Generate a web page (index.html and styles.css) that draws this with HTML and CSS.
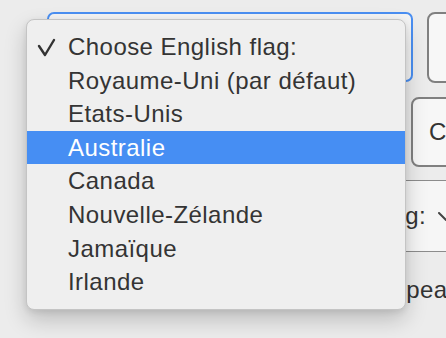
FILE: index.html
```html
<!DOCTYPE html>
<html lang="fr">
<head>
<meta charset="utf-8">
<title>Choose English flag</title>
<link rel="stylesheet" href="styles.css">
</head>
<body>
<div class="page">
  <div class="row-top">
    <div class="select-focused">Choose English flag:</div>
    <div class="btn btn-top">↻ Réinitialiser</div>
  </div>
  <div class="row-second">
    <div class="btn btn-second">Copier</div>
  </div>
  <div class="section">
    <span class="section-label">Setting:</span>
    <svg class="chevron" width="16" height="10" viewBox="0 0 16 10"><path d="M1 1 L8 8 L15 1" fill="none" stroke="#444" stroke-width="2" stroke-linecap="round" stroke-linejoin="round"/></svg>
  </div>
  <p class="footer-text">Appearance settings</p>
</div>

<div class="menu">
  <div class="item checked">
    <svg class="check" width="20" height="20" viewBox="0 0 20 20"><path d="M2 9 L8 18 L17 3" fill="none" stroke="#333" stroke-width="2.4" stroke-linecap="round" stroke-linejoin="round"/></svg>
    Choose English flag:
  </div>
  <div class="item">Royaume-Uni (par défaut)</div>
  <div class="item">Etats-Unis</div>
  <div class="item active">Australie</div>
  <div class="item">Canada</div>
  <div class="item">Nouvelle-Zélande</div>
  <div class="item">Jamaïque</div>
  <div class="item">Irlande</div>
</div>
</body>
</html>
```
FILE: styles.css
```css
html, body {
  margin: 0;
  padding: 0;
}
body {
  width: 446px;
  height: 338px;
  overflow: hidden;
  background: #ececec;
  font-family: "Liberation Sans", Arial, sans-serif;
  color: #333333;
  position: relative;
}
.page {
  width: 640px;
  padding-top: 12px;
}
.row-top {
  display: flex;
  gap: 14px;
  padding-left: 47px;
}
.select-focused {
  box-sizing: border-box;
  width: 366px;
  height: 70px;
  border: 2px solid #4a8ff2;
  border-radius: 7px;
  background: #f4f4f4;
  font-size: 24px;
  display: flex;
  align-items: center;
  padding-left: 20px;
}
.btn {
  box-sizing: border-box;
  border: 2px solid #808080;
  border-radius: 8px;
  background: #f7f7f7;
  font-size: 24px;
  letter-spacing: 0.4px;
  display: flex;
  align-items: center;
  padding-left: 16px;
  color: #333;
}
.btn-top {
  width: 200px;
  height: 71px;
}
.row-second {
  margin-top: 14px;
  padding-left: 411px;
}
.btn-second {
  width: 200px;
  height: 70px;
}
.section {
  margin-top: 13px;
  margin-left: 60px;
  box-sizing: border-box;
  height: 72px;
  border-top: 1px solid #8c8c8c;
  border-bottom: 1px solid #8c8c8c;
  background: #f6f6f6;
  display: flex;
  align-items: center;
  gap: 12px;
}
.section-label {
  width: 366px;
  text-align: right;
  font-size: 24px;
  letter-spacing: 0.4px;
}
.chevron {
  margin-top: 2px;
}
.footer-text {
  margin: 24px 0 0 0;
  padding-left: 376px;
  font-size: 24px;
  letter-spacing: 0.4px;
  white-space: nowrap;
}
.menu {
  position: absolute;
  left: 26px;
  top: 19px;
  width: 380px;
  box-sizing: border-box;
  padding: 10px 0;
  background: #efefef;
  border: 1px solid #c4c4c4;
  border-radius: 8px;
  box-shadow: 0 10px 22px rgba(0, 0, 0, 0.2), 0 2px 6px rgba(0, 0, 0, 0.08);
}
.item {
  position: relative;
  height: 33.6px;
  line-height: 33.6px;
  padding-left: 41px;
  font-size: 24px;
  letter-spacing: 0.45px;
  color: #343434;
  white-space: nowrap;
}
.item.active {
  background: #468ef3;
  color: #ffffff;
}
.check {
  position: absolute;
  left: 10px;
  top: 7px;
}
```
